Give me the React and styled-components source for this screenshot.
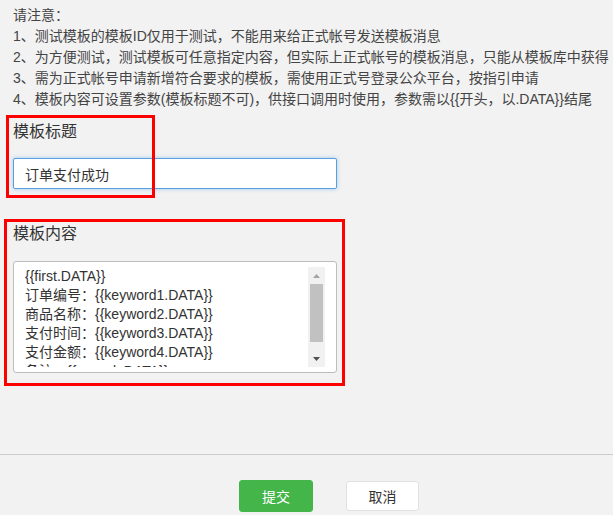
import React from "react";
import styled, { createGlobalStyle } from "styled-components";

const GlobalStyle = createGlobalStyle`
  html, body {
    margin: 0;
    padding: 0;
    background: #f2f2f2;
    overflow: hidden;
  }
  body {
    font-family: "Liberation Sans", "Noto Sans CJK SC", sans-serif;
    color: #333;
  }
`;

const Page = styled.div`
  width: 613px;
  height: 515px;
  overflow: hidden;
`;

const Notes = styled.div`
  padding: 5px 13px 0;
  font-size: 14px;
  line-height: 21px;
  color: #444;
  white-space: nowrap;
`;

const Field = styled.div`
  position: relative;
  padding: 0 13px;
  margin-top: ${(p) => p.$top}px;
`;

const Label = styled.div`
  font-size: 16px;
  line-height: 22px;
  color: #333;
`;

const Input = styled.input`
  box-sizing: border-box;
  display: block;
  width: 324px;
  height: 31px;
  margin-top: 15px;
  padding: 0 11px;
  border: 1px solid #5b9fe3;
  border-radius: 2px;
  box-shadow: 0 0 4px rgba(102, 175, 233, 0.6);
  background: #fff;
  font-family: "Liberation Sans", "Noto Sans CJK SC", sans-serif;
  font-size: 14px;
  color: #333;
  outline: none;
`;

const AreaBox = styled.div`
  box-sizing: border-box;
  display: flex;
  width: 324px;
  height: 112px;
  margin-top: 16px;
  padding: 5px 11px;
  border: 1px solid #bdbdbd;
  border-radius: 3px;
  background: #fff;
`;

const Area = styled.textarea`
  box-sizing: border-box;
  display: block;
  flex: 1;
  height: 100px;
  padding: 0;
  margin: 0;
  border: none;
  resize: none;
  outline: none;
  overflow: hidden;
  font-family: "Liberation Sans", "Noto Sans CJK SC", sans-serif;
  font-size: 14px;
  line-height: 19px;
  color: #333;
`;

const ScrollBar = styled.div`
  display: flex;
  flex-direction: column;
  width: 17px;
  height: 100px;
  background: #f1f1f1;
`;

const ScrollButton = styled.div`
  display: flex;
  align-items: center;
  justify-content: center;
  height: 17px;
  flex-shrink: 0;
`;

const ScrollTrack = styled.div`
  flex: 1;
  padding: 0 2px;
`;

const Thumb = styled.div`
  height: 58px;
  background: #c1c1c1;
`;

const Highlight = styled.div`
  position: absolute;
  left: ${(p) => p.$left}px;
  top: ${(p) => p.$top}px;
  width: ${(p) => p.$w}px;
  height: ${(p) => p.$h}px;
  box-sizing: border-box;
  border: 3px solid #ff0000;
  pointer-events: none;
`;

const Divider = styled.div`
  margin-top: 81px;
  height: 1px;
  background: #cccccc;
`;

const Actions = styled.div`
  display: flex;
  align-items: center;
  gap: 33px;
  padding-left: 239px;
  margin-top: 25px;
`;

const Button = styled.button`
  box-sizing: border-box;
  width: ${(p) => (p.$primary ? 74 : 73)}px;
  height: ${(p) => (p.$primary ? 32 : 30)}px;
  border-radius: 3px;
  border: 1px solid ${(p) => (p.$primary ? "#44b549" : "#e2e2e2")};
  background: ${(p) => (p.$primary ? "#44b549" : "#ffffff")};
  color: ${(p) => (p.$primary ? "#ffffff" : "#333")};
  font-family: "Liberation Sans", "Noto Sans CJK SC", sans-serif;
  font-size: 14px;
  padding: 0;
  cursor: pointer;
`;

const notes = [
  "请注意：",
  "1、测试模板的模板ID仅用于测试，不能用来给正式帐号发送模板消息",
  "2、为方便测试，测试模板可任意指定内容，但实际上正式帐号的模板消息，只能从模板库中获得",
  "3、需为正式帐号申请新增符合要求的模板，需使用正式号登录公众平台，按指引申请",
  "4、模板内容可设置参数(模板标题不可)，供接口调用时使用，参数需以{{开头，以.DATA}}结尾",
];

const content = [
  "{{first.DATA}}",
  "订单编号：{{keyword1.DATA}}",
  "商品名称：{{keyword2.DATA}}",
  "支付时间：{{keyword3.DATA}}",
  "支付金额：{{keyword4.DATA}}",
  "备注：{{remark.DATA}}",
].join("\n");

const Arrow = ({ down }) => (
  <svg width="7" height="4" viewBox="0 0 7 4">
    <path
      d={down ? "M0 0L7 0L3.5 4Z" : "M0 4L3.5 0L7 4Z"}
      fill={down ? "#505050" : "#a3a3a3"}
    />
  </svg>
);

export default function App() {
  return (
    <Page>
      <GlobalStyle />
      <Notes>
        {notes.map((line) => (
          <div key={line}>{line}</div>
        ))}
      </Notes>

      <Field $top={11}>
        <Label>模板标题</Label>
        <Input defaultValue="订单支付成功" />
        <Highlight $left={6} $top={-6} $w={149} $h={83} />
      </Field>

      <Field $top={34}>
        <Label>模板内容</Label>
        <AreaBox>
          <Area defaultValue={content} />
          <ScrollBar>
            <ScrollButton>
              <Arrow />
            </ScrollButton>
            <ScrollTrack>
              <Thumb />
            </ScrollTrack>
            <ScrollButton>
              <Arrow down />
            </ScrollButton>
          </ScrollBar>
        </AreaBox>
        <Highlight $left={4} $top={-4} $w={341} $h={167} />
      </Field>

      <Divider />

      <Actions>
        <Button $primary>提交</Button>
        <Button>取消</Button>
      </Actions>
    </Page>
  );
}
